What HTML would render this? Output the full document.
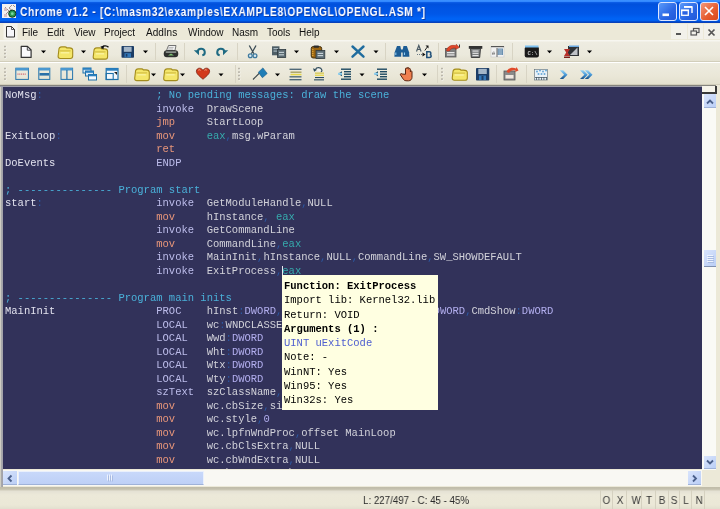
<!DOCTYPE html>
<html><head><meta charset="utf-8">
<style>
*{margin:0;padding:0;box-sizing:border-box}
html,body{width:720px;height:509px;overflow:hidden;background:#ECE9D8;font-family:"Liberation Sans",sans-serif}
.a{position:absolute}
#title{left:0;top:0;width:720px;height:24px;background:linear-gradient(#3C92FF 0,#3288FF 1.5px,#0A5CE6 2.5px,#0050DC 4px,#0054E3 8px,#0057E8 14px,#0064F6 19px,#0060F0 20.5px,#0044C4 22px,#0A40B8 22.6px,#DCDCEE 23px,#EEEDE4 24px)}
#ttext{will-change:transform;left:20px;top:5px;color:#fff;text-shadow:1px 1px 0 #0A3CA8;font-weight:bold;font-size:12px;letter-spacing:0.8px;white-space:nowrap;transform:scaleX(0.85);transform-origin:0 0}
.tbtn{position:absolute;top:2px;width:19px;height:19px;border:1px solid #DDE6FF;border-radius:3px;background:linear-gradient(135deg,#5A9AFA,#2A66E4 60%,#2058D8)}
#menu{left:0;top:23px;width:720px;height:17px;background:#ECE9D8}
.mi{position:absolute;will-change:transform;top:27px;font-size:10px;color:#111}
.tb{position:absolute;left:0;width:720px;border-bottom:1px solid #D2CEBB}
#ed{left:3px;top:87px;width:699px;height:382px;background:#32325A;overflow:hidden}
#frame{left:0;top:85px;width:718px;height:403px;background:linear-gradient(#85847E 0,#85847E 1px,#9E9EAA 1px,#9E9EAA 2px,transparent 2px),linear-gradient(90deg,#CFCDC2 0,#CFCDC2 1px,#AAAAAA 1px,#A0A0A8 3px,transparent 3px)}
#code{position:absolute;will-change:transform;left:2px;top:1.5px;font-family:"Liberation Mono",monospace;font-size:10.5px;line-height:13.5px;white-space:pre;color:#D2D2DA}
.l{color:#E2E2EE}.p{color:#2C58A2}.c{color:#4AB0D8}.d{color:#BCBCEA}.i{color:#E8967A}.r{color:#36AAAC}.t{color:#B2AEEE}
#tip{left:282px;top:275px;width:156px;height:135px;background:#FFFFE1}
#tipt{position:absolute;will-change:transform;left:2px;top:3.5px;font-family:"Liberation Mono",monospace;font-size:10.5px;line-height:14.3px;white-space:pre;color:#000}
#vs{left:702px;top:87px;width:15px;height:383px;background:#FAFAF6;border-right:1px solid #E4E2D8}
#hs{left:3px;top:470px;width:699px;height:16px;background:#F9F8F3}
#corner{left:702px;top:470px;width:15px;height:17px;background:#ECE9D8}
#rstrip{left:716px;top:85px;width:4px;height:402px;background:#ECE9D8}
.sbtn{position:absolute;background:linear-gradient(135deg,#D9E4FC,#BACEF6);border-bottom:1px solid #9FB2D8}
#status{left:0;top:487px;width:720px;height:22px;background:linear-gradient(#BFBBA8 0,#C4C0AD 2px,#CFCBB9 3px,#E4E1D4 4px,#ECE9D9 8px,#EBE8D7 18px,#E2DFCF 22px)}
#stext{will-change:transform;left:363px;top:493px;font-size:11.6px;color:#2A2A2A;white-space:nowrap;transform:scaleX(0.84);transform-origin:0 0}
.sl{will-change:transform;position:absolute;top:493px;font-size:11.6px;color:#333;transform:scaleX(0.84)}
.sd{position:absolute;top:490px;width:1px;height:19px;background:#D5D1C0}
</style></head><body>
<div id="title" class="a"></div>
<div id="ttext" class="a">Chrome v1.2 - [C:\masm32\examples\EXAMPLE8\OPENGL\OPENGL.ASM *]</div>
<div class="tbtn" style="left:658px"></div>
<div class="tbtn" style="left:679px"></div>
<div class="tbtn" style="left:700px;background:linear-gradient(135deg,#F4977A,#E55B2E 60%,#D8481C)"></div>
<div id="menu" class="a"></div>
<div class="mi" style="left:22px">File</div>
<div class="mi" style="left:47px">Edit</div>
<div class="mi" style="left:74px">View</div>
<div class="mi" style="left:104px">Project</div>
<div class="mi" style="left:146px">AddIns</div>
<div class="mi" style="left:188px">Window</div>
<div class="mi" style="left:232px">Nasm</div>
<div class="mi" style="left:267px">Tools</div>
<div class="mi" style="left:299px">Help</div>
<div class="tb" style="top:40px;height:22px;background:linear-gradient(#F7F6F0 0,#F7F6F0 1px,#EEECE1 2px,#EBE9DC 15px,#E5E2D3 21px)"></div>
<div class="a" style="left:0;top:62px;width:720px;height:1px;background:#FFFFFF"></div><div class="tb" style="top:63px;height:22px;background:linear-gradient(#EEECE0,#EAE7D8 60%,#E4E1CF)"></div>
<!--ICONS-->
<svg class="a" style="left:0;top:0" width="720" height="90" viewBox="0 0 720 90">
<!-- title icon -->
<g>
<rect x="2" y="4" width="14" height="14" fill="#F2F0F0"/>
<path d="M5 7l4 4M9 11l-4 4M12 5l-3 3M9 8l4 3M13 5l2 2" stroke="#8A7A78" stroke-width="1" opacity="0.8"/>
<rect x="4" y="8" width="3" height="3" fill="#D8C0C4"/><rect x="4" y="14" width="3" height="3" fill="#D8C0C4"/>
<circle cx="12.3" cy="13.7" r="3.6" fill="#2A9A50" stroke="#0E3A20" stroke-width="1"/>
<circle cx="12.3" cy="13.7" r="1.4" fill="#7AD8A0"/>
</g>
<!-- title buttons glyphs -->
<rect x="662.5" y="13.5" width="6.5" height="2.6" fill="#fff"/>
<path d="M684 7h8v6" fill="none" stroke="#fff" stroke-width="1.4"/><rect x="684" y="6" width="8" height="1.6" fill="#fff"/>
<rect x="681.7" y="10.3" width="6.6" height="5" fill="#2A62E2" stroke="#fff" stroke-width="1.3"/><rect x="681" y="9.6" width="8" height="1.6" fill="#fff"/>
<path d="M705 7l8 8M713 7l-8 8" stroke="#fff" stroke-width="1.6"/>
<!-- menu doc icon -->
<rect x="3.5" y="23.5" width="14" height="16" fill="#F4F3EC"/>
<path d="M6.5 26.5h5l3 3v7.5h-8z" fill="#F6F6FA" stroke="#333" stroke-width="1"/>
<path d="M11.5 26.5v3h3" fill="none" stroke="#333" stroke-width="0.8"/>
<!-- MDI buttons -->
<rect x="671" y="24" width="16" height="15" fill="#F2F1EA"/>
<rect x="688" y="24" width="15" height="15" fill="#F2F1EA"/>
<rect x="704" y="24" width="16" height="15" fill="#F2F1EA"/>
<rect x="676" y="33" width="5" height="2" fill="#555"/>
<rect x="693.5" y="28.5" width="5.5" height="4" fill="none" stroke="#555" stroke-width="1.2"/>
<rect x="691" y="31" width="5.5" height="4" fill="#F2F1EA" stroke="#555" stroke-width="1.2"/>
<path d="M708.5 29.5l6 6M714.5 29.5l-6 6" stroke="#555" stroke-width="1.7"/>
<!-- grips -->
<rect x="4.7" y="46.3" width="1.6" height="1.6" fill="#FFFFFF"/><rect x="4.2" y="45.8" width="1.6" height="1.6" fill="#ABA79A"/><rect x="4.7" y="49.8" width="1.6" height="1.6" fill="#FFFFFF"/><rect x="4.2" y="49.3" width="1.6" height="1.6" fill="#ABA79A"/><rect x="4.7" y="53.3" width="1.6" height="1.6" fill="#FFFFFF"/><rect x="4.2" y="52.8" width="1.6" height="1.6" fill="#ABA79A"/><rect x="4.7" y="56.8" width="1.6" height="1.6" fill="#FFFFFF"/><rect x="4.2" y="56.3" width="1.6" height="1.6" fill="#ABA79A"/><rect x="4.7" y="68.3" width="1.6" height="1.6" fill="#FFFFFF"/><rect x="4.2" y="67.8" width="1.6" height="1.6" fill="#ABA79A"/><rect x="4.7" y="71.8" width="1.6" height="1.6" fill="#FFFFFF"/><rect x="4.2" y="71.3" width="1.6" height="1.6" fill="#ABA79A"/><rect x="4.7" y="75.3" width="1.6" height="1.6" fill="#FFFFFF"/><rect x="4.2" y="74.8" width="1.6" height="1.6" fill="#ABA79A"/><rect x="4.7" y="78.8" width="1.6" height="1.6" fill="#FFFFFF"/><rect x="4.2" y="78.3" width="1.6" height="1.6" fill="#ABA79A"/><rect x="238.7" y="68.3" width="1.6" height="1.6" fill="#FFFFFF"/><rect x="238.2" y="67.8" width="1.6" height="1.6" fill="#ABA79A"/><rect x="238.7" y="71.8" width="1.6" height="1.6" fill="#FFFFFF"/><rect x="238.2" y="71.3" width="1.6" height="1.6" fill="#ABA79A"/><rect x="238.7" y="75.3" width="1.6" height="1.6" fill="#FFFFFF"/><rect x="238.2" y="74.8" width="1.6" height="1.6" fill="#ABA79A"/><rect x="238.7" y="78.8" width="1.6" height="1.6" fill="#FFFFFF"/><rect x="238.2" y="78.3" width="1.6" height="1.6" fill="#ABA79A"/><rect x="441.7" y="68.3" width="1.6" height="1.6" fill="#FFFFFF"/><rect x="441.2" y="67.8" width="1.6" height="1.6" fill="#ABA79A"/><rect x="441.7" y="71.8" width="1.6" height="1.6" fill="#FFFFFF"/><rect x="441.2" y="71.3" width="1.6" height="1.6" fill="#ABA79A"/><rect x="441.7" y="75.3" width="1.6" height="1.6" fill="#FFFFFF"/><rect x="441.2" y="74.8" width="1.6" height="1.6" fill="#ABA79A"/><rect x="441.7" y="78.8" width="1.6" height="1.6" fill="#FFFFFF"/><rect x="441.2" y="78.3" width="1.6" height="1.6" fill="#ABA79A"/>
<!-- separators -->
<g fill="#D8D4C4">
<rect x="155" y="43" width="1" height="17"/><rect x="184" y="43" width="1" height="17"/><rect x="237" y="43" width="1" height="17"/>
<rect x="385" y="43" width="1" height="17"/><rect x="438" y="43" width="1" height="17"/><rect x="512" y="43" width="1" height="17"/>
<rect x="126" y="65" width="1" height="18"/><rect x="235" y="65" width="1" height="18"/><rect x="437" y="65" width="1" height="18"/>
<rect x="496" y="65" width="1" height="18"/><rect x="526" y="65" width="1" height="18"/>
</g>
<!-- dropdown arrows -->
<g fill="#000">
<path d="M41 50.5h5l-2.5 2.8z"/><path d="M81 50.5h5l-2.5 2.8z"/><path d="M143 50.5h5l-2.5 2.8z"/>
<path d="M294 50.5h5l-2.5 2.8z"/><path d="M334 50.5h5l-2.5 2.8z"/><path d="M373.5 50.5h5l-2.5 2.8z"/>
<path d="M547 50.5h5l-2.5 2.8z"/><path d="M587 50.5h5l-2.5 2.8z"/>
<path d="M151 73.5h5l-2.5 2.8z"/><path d="M180 73.5h5l-2.5 2.8z"/><path d="M218.5 73.5h5l-2.5 2.8z"/>
<path d="M275 73.5h5l-2.5 2.8z"/><path d="M359.5 73.5h5l-2.5 2.8z"/><path d="M422 73.5h5l-2.5 2.8z"/>
</g>
<!-- ROW 1 -->
<!-- new doc -->
<path d="M21.2 46.4h6.3l3.6 3.6v7.4h-9.9z" fill="#FAFAFC" stroke="#333" stroke-width="1.2" stroke-linejoin="round"/>
<path d="M27.3 46.6v3.6h3.6" fill="none" stroke="#333" stroke-width="0.9"/>
<!-- open folder -->
<path d="M58.800000000000004 50.3 q0 -3.4 3 -3.4 h3 q1.5 0 2 1 h2.6 q3.3 0 3.3 2.4 v5.8 q0 2.4 -2.4 2.4 h-10.0 q-2.2 0 -2.2 -2.2 z" fill="#F4E66A" stroke="#A38C1C" stroke-width="1.1"/><path d="M59.7 50.9h10.9" stroke="#C9B23A" stroke-width="0.9"/><path d="M60.7 52.8h8.5" stroke="#FBF4A8" stroke-width="1.2"/>
<!-- folder with arrow -->
<path d="M93.89999999999999 51.3 q0 -3.4 3 -3.4 h3 q1.5 0 2 1 h2.6 q3.1 0 3.1 2.4 v5.4 q0 2.4 -2.4 2.4 h-9.8 q-2.2 0 -2.2 -2.2 z" fill="#F4E66A" stroke="#A38C1C" stroke-width="1.1"/><path d="M94.8 51.9h10.7" stroke="#C9B23A" stroke-width="0.9"/><path d="M95.8 53.8h8.3" stroke="#FBF4A8" stroke-width="1.2"/>
<path d="M102 48.5c0.2-3 4.5-3.5 6.5-1.2" fill="none" stroke="#111" stroke-width="1.3"/>
<path d="M100.4 46.6l3 2.8 0.6-3.6z" fill="#111"/>
<!-- save -->
<rect x="121.5" y="46" width="12.5" height="11.8" rx="0.8" fill="#1C3D66"/>
<rect x="123.8" y="46.8" width="7.8" height="5" fill="#A4B6C8"/>
<rect x="124.5" y="53.2" width="6.5" height="4.2" fill="#3478B8"/>
<rect x="125.8" y="54" width="1.6" height="2.6" fill="#1C3D66"/>
<!-- printer -->
<path d="M166.5 50.5l2-5h7.5l-1 5z" fill="#F0F0F0" stroke="#555" stroke-width="0.8"/>
<path d="M168.5 47.5h5M168 49h5" stroke="#999" stroke-width="0.6"/>
<rect x="163.8" y="50.3" width="14.4" height="7" rx="3" fill="#2E302E"/>
<rect x="165.5" y="51.3" width="11" height="1.6" rx="0.8" fill="#8A908A"/>
<path d="M168 55.5h6l-3-2z" fill="#7CC070"/>
<!-- undo / redo -->
<path d="M197.6 51.8A3.6 3.4 0 1 1 202.3 55.4" fill="none" stroke="#1E6A82" stroke-width="2"/>
<path d="M193.8 50.2h5.2v5z" fill="#1E6A82"/>
<path d="M224.4 51.8A3.6 3.4 0 1 0 219.7 55.4" fill="none" stroke="#1E6A82" stroke-width="2"/>
<path d="M228.2 50.2h-5.2v5z" fill="#1E6A82"/>
<!-- scissors -->
<path d="M249.3 45.5l4.6 8.3M256 45.5l-4.6 8.3" stroke="#3A4A54" stroke-width="1.3"/>
<circle cx="250.3" cy="55.8" r="1.9" fill="#D8E8F0" stroke="#3F7A9E" stroke-width="1.3"/>
<circle cx="255" cy="55.8" r="1.9" fill="#D8E8F0" stroke="#3F7A9E" stroke-width="1.3"/>
<!-- copy -->
<rect x="272" y="46.3" width="7.5" height="9" fill="#4E5E66"/>
<rect x="273.5" y="48" width="4.5" height="1.2" fill="#A8B8C0"/><rect x="273.5" y="50.5" width="4.5" height="1.2" fill="#A8B8C0"/>
<rect x="277.5" y="49.5" width="8.2" height="8" fill="#5A6A72" stroke="#2E3A40" stroke-width="0.8"/>
<rect x="279" y="51.8" width="5" height="1.2" fill="#C0CCD2"/><rect x="279" y="54.2" width="5" height="1.2" fill="#C0CCD2"/>
<!-- paste -->
<rect x="311.2" y="46.5" width="10.5" height="11.5" rx="2" fill="#9A6410" stroke="#3A2808" stroke-width="0.9"/>
<path d="M312.8 49v7" stroke="#E8B040" stroke-width="1.2" stroke-dasharray="1.2 0.8"/>
<rect x="313.5" y="45.4" width="5.5" height="2.4" rx="0.8" fill="#2A2A2A"/>
<rect x="316" y="50.5" width="8.8" height="8" fill="#5E6E76" stroke="#2E3A40" stroke-width="0.8"/>
<rect x="317.6" y="52.8" width="5.5" height="1.2" fill="#C8D2D8"/><rect x="317.6" y="55" width="5.5" height="1.2" fill="#C8D2D8"/>
<!-- delete X -->
<path d="M352.5 46.5l11 10.2M363.5 46.5l-11 10.2" stroke="#1F6C9E" stroke-width="2.4" stroke-linecap="round"/>
<!-- binoculars -->
<path d="M397 46h3.3l0.9 4v6.8h-6.8l0.3-4.5z" fill="#1C5C94"/><path d="M406.8 46h-3.3l-0.9 4v6.8h6.8l-0.3-4.5z" fill="#1C5C94"/><rect x="400.5" y="49.5" width="3" height="3" fill="#1C5C94"/>
<path d="M395.8 52.5v2.5M404.5 52.5v2.5" stroke="#8CC8F0" stroke-width="1.1"/>
<!-- replace -->
<path d="M416.5 51.5l2.3-6 2.3 6M417.4 49.5h2.8" fill="none" stroke="#4A5A64" stroke-width="1.2"/>
<path d="M424.8 50.5l2.5-3.5" stroke="#222" stroke-width="1"/><path d="M425.5 45.5h3v3z" fill="#111"/>
<path d="M417 54.5h1M419 54.5h1M421 54.5h1" stroke="#6A7A84" stroke-width="1"/>
<path d="M422.5 52.5l3 2-3 2z" fill="#111"/>
<path d="M426.8 51.8h2.6c1.8 0 2 2.6 0.4 2.8c2 0.2 1.9 2.8-0.4 2.8h-2.6z" fill="none" stroke="#1E4E78" stroke-width="1.5"/>
<!-- icon window w/ red arrow -->
<rect x="445.5" y="48.5" width="10.5" height="8.5" fill="#7C7C7C" stroke="#555" stroke-width="0.8"/>
<rect x="447" y="52" width="7.5" height="1.3" fill="#E8E8E8"/><rect x="447" y="54.3" width="7.5" height="1.3" fill="#E8E8E8"/>
<path d="M446.5 51c0.5-4.5 5-6.5 9.5-5.3l0.3-1.5 3 3.3-3.8 2 0.3-1.5c-3-0.5-5.5 0.8-6.3 3z" fill="#E0482A" stroke="#A02A18" stroke-width="0.5"/><rect x="459" y="44.5" width="1" height="3" fill="#333"/>
<!-- icon 2 -->
<rect x="468.8" y="46" width="13.5" height="2.8" fill="#333"/>
<path d="M470.5 48.5h10l-0.8 9h-8.4z" fill="#7A7D7E" stroke="#333" stroke-width="0.9"/>
<rect x="472.5" y="50.5" width="6" height="1.1" fill="#E4E4E4"/><rect x="472.5" y="52.8" width="6" height="1.1" fill="#E4E4E4"/><rect x="472.5" y="55" width="6" height="1.1" fill="#E4E4E4"/>
<!-- icon 3 -->
<rect x="491" y="46.5" width="13" height="10.5" fill="#F2F2F2" stroke="#C8C8C8" stroke-width="0.6"/>
<rect x="491" y="46" width="13" height="1.2" fill="#555"/>
<text x="492" y="54.5" font-size="6" font-family="Liberation Sans" fill="#555">&#233;</text>
<rect x="497.5" y="48.5" width="5.5" height="6.5" fill="#6A90B0"/><path d="M498.5 50h3.5M498.5 52h3.5M498.5 54h3.5" stroke="#C8D8E4" stroke-width="0.7"/>
<rect x="496.5" y="48" width="1" height="9" fill="#666"/>
<!-- cmd -->
<rect x="524.7" y="46.5" width="14.2" height="11" rx="2" fill="#1A1A1A"/>
<rect x="525" y="45.5" width="13.5" height="2" fill="#7CC0F0"/>
<text x="527.5" y="54.8" font-size="5.6" font-weight="bold" font-family="Liberation Mono" fill="#C8C8C8">C:\</text>
<!-- icon red/monitor -->
<rect x="568" y="46" width="11" height="10" fill="#2E3236"/>
<path d="M570 55l7.5-7.5v7.5z" fill="#D8DCE0" opacity="0.85"/>
<rect x="569" y="45.5" width="10" height="1.5" fill="#6AA8E0"/>
<path d="M564 49h6l-2.2 3.5 2.2 3.5h-6l2.2-3.5z" fill="#B8302A"/>
<rect x="564" y="56.5" width="6" height="1.5" fill="#7A1E18"/>
<!-- ROW 2 -->
<!-- window icons -->
<g fill="none" stroke="#2474AC" stroke-width="1">
<rect x="15.8" y="68.2" width="12.6" height="11.2"/>
<rect x="38.8" y="68.2" width="11" height="11.2"/>
<rect x="61" y="68.2" width="11.6" height="11.2"/>
</g>
<rect x="15.8" y="68" width="12.6" height="2.5" fill="#4A98D0"/>
<path d="M17.5 74.2h9" stroke="#D06070" stroke-width="1.2" stroke-dasharray="1 0.8"/>
<rect x="38.8" y="68" width="11" height="2.5" fill="#4A98D0"/>
<rect x="39.5" y="73" width="9.6" height="2.6" fill="#2A70A8"/>
<rect x="61" y="68" width="11.6" height="2.5" fill="#4A98D0"/>
<rect x="66.3" y="70" width="1.2" height="9.4" fill="#1E70A8"/>
<!-- cascade -->
<rect x="83" y="68" width="8" height="5" fill="#DCEAF6" stroke="#1E70A8" stroke-width="1"/>
<rect x="83" y="68" width="8" height="1.8" fill="#2A80C0"/>
<rect x="85.5" y="71" width="8" height="5" fill="#DCEAF6" stroke="#1E70A8" stroke-width="1"/>
<rect x="85.5" y="71" width="8" height="1.8" fill="#2A80C0"/>
<rect x="88.5" y="74.5" width="8" height="5.5" fill="#F4F8FC" stroke="#1E70A8" stroke-width="1"/>
<rect x="88.5" y="74.5" width="8" height="1.8" fill="#2A80C0"/>
<!-- window w/ arrow -->
<rect x="106.2" y="68.5" width="11.8" height="11" fill="#F4F8FC" stroke="#1E70A8" stroke-width="1.2"/>
<rect x="106.2" y="68.3" width="11.8" height="2.4" fill="#2A80C0"/>
<rect x="106.2" y="73.5" width="7" height="6" fill="none" stroke="#1E70A8" stroke-width="1.1"/>
<path d="M114 72h3v3z" fill="#222"/>
<!-- folders row2 -->
<path d="M135.4 72.3 q0 -3.4 3 -3.4 h3 q1.5 0 2 1 h2.6 q3.3 0 3.3 2.4 v5.9 q0 2.4 -2.4 2.4 h-10.0 q-2.2 0 -2.2 -2.2 z" fill="#F4E66A" stroke="#A38C1C" stroke-width="1.1"/><path d="M136.3 72.89999999999999h10.9" stroke="#C9B23A" stroke-width="0.9"/><path d="M137.3 74.8h8.5" stroke="#FBF4A8" stroke-width="1.2"/>
<path d="M164.4 72.3 q0 -3.4 3 -3.4 h3 q1.5 0 2 1 h2.6 q3.1 0 3.1 2.4 v5.9 q0 2.4 -2.4 2.4 h-9.8 q-2.2 0 -2.2 -2.2 z" fill="#F4E66A" stroke="#A38C1C" stroke-width="1.1"/><path d="M165.3 72.89999999999999h10.7" stroke="#C9B23A" stroke-width="0.9"/><path d="M166.3 74.8h8.3" stroke="#FBF4A8" stroke-width="1.2"/>
<!-- heart -->
<path d="M203 79.3c-2.3-2.3-6.6-5-6.6-8c0-1.9 1.4-3.1 3.1-3.1c1.6 0 2.8 1 3.5 2.1c0.7-1.1 1.9-2.1 3.5-2.1c1.7 0 3.1 1.2 3.1 3.1c0 3-4.3 5.7-6.6 8z" fill="#D23A1C" stroke="#7A1C0C" stroke-width="0.8"/>
<path d="M198.3 70.3c0.6-0.7 1.6-0.7 2.2 0M204.6 70.3c0.6-0.7 1.6-0.7 2.2 0" stroke="#F8B090" stroke-width="1" fill="none"/>
<!-- flag pen -->
<path d="M253 79.5l9.5-9.5" stroke="#3A4448" stroke-width="1.1"/>
<path d="M258.3 72.3l4.6-4.4 4.3 5.6-4.8 4.2z" fill="#1F7DB6" stroke="#165A88" stroke-width="0.6"/>
<!-- lines -->
<rect x="289.5" y="68.7" width="12" height="1.1" fill="#2A4A60"/>
<rect x="290.5" y="71.5" width="11" height="1.4" fill="#A8A060"/>
<rect x="290.5" y="73.8" width="11" height="1.5" fill="#E6D84A"/>
<rect x="289.5" y="76.3" width="12" height="1.1" fill="#2A4A60"/>
<rect x="289.5" y="79.2" width="12" height="1.1" fill="#2A4A60"/>
<!-- bookmark -->
<path d="M315.5 69.5c1-2.5 5.5-2.5 6.3 0.3c0.4 1.3-0.3 2-1 2.2" fill="#F4F4F0" stroke="#2E4A5A" stroke-width="1.2"/>
<path d="M313 68.3l1.2 3.4 2.8-2z" fill="#2E4A5A"/>
<rect x="315" y="72.5" width="9" height="1.3" fill="#D8C850"/>
<rect x="315" y="74.6" width="9" height="1.3" fill="#E6D84A"/>
<rect x="315" y="77" width="9" height="1.1" fill="#2A4A60"/>
<rect x="314" y="79.3" width="10" height="1.1" fill="#2A4A60"/>
<!-- indent/outdent -->
<g fill="#1E4A62">
<rect x="341" y="68.5" width="10" height="1.4"/><rect x="344" y="71" width="7" height="1.4"/><rect x="344" y="73.5" width="7" height="1.4"/><rect x="344" y="76" width="7" height="1.4"/><rect x="341" y="78.5" width="10" height="1.4"/>
<path d="M338 73.8l4 -2.5v5z"/>
<rect x="377" y="68.5" width="10" height="1.4"/><rect x="380" y="71" width="7" height="1.4"/><rect x="380" y="73.5" width="7" height="1.4"/><rect x="380" y="76" width="7" height="1.4"/><rect x="377" y="78.5" width="10" height="1.4"/>
<path d="M374 73.8l4 -2.5v5z"/>
</g>
<rect x="338" y="72.8" width="4" height="2" fill="#8ED0F0"/><rect x="374" y="72.8" width="4" height="2" fill="#8ED0F0"/>
<!-- hand -->
<path d="M402 74c-1-1-2 0-1.5 1l3 4.5c0.8 1 2 1.3 3.5 1.3h1.5c2 0 3.5-1.5 3.5-3.5v-5.5c0-1.2-1.6-1.2-1.6 0v-2.5c0-1.2-1.6-1.2-1.6 0v-1c0-1.2-1.7-1.2-1.7 0v0.5c0-1.2-1.6-1.2-1.6 0v5.5z" fill="#F08050" stroke="#5A2410" stroke-width="1"/>
<!-- open folder row2 -->
<path d="M452.90000000000003 72.5 q0 -3.4 3 -3.4 h3 q1.5 0 2 1 h2.6 q3.8 0 3.8 2.4 v5.4 q0 2.4 -2.4 2.4 h-10.5 q-2.2 0 -2.2 -2.2 z" fill="#F4E66A" stroke="#A38C1C" stroke-width="1.1"/><path d="M453.8 73.1h11.4" stroke="#C9B23A" stroke-width="0.9"/><path d="M454.8 75.0h9.0" stroke="#FBF4A8" stroke-width="1.2"/>
<!-- save row2 -->
<rect x="476" y="68" width="13.3" height="12.5" rx="0.8" fill="#1C3D66"/>
<rect x="478.3" y="68.8" width="8.5" height="5.2" fill="#A4B6C8"/>
<rect x="479" y="75.5" width="7" height="4.5" fill="#3478B8"/><rect x="481.5" y="76" width="2" height="4" fill="#1C3D66"/>
<!-- doc w red arrow row2 -->
<rect x="504" y="71" width="11" height="9" fill="#8A8A8A" stroke="#555" stroke-width="0.8"/>
<rect x="505.5" y="75" width="8" height="3.5" fill="#F0E8E0"/>
<path d="M506.5 72c1-4 6-5 9.5-3.5l0.5-1.5 2 3.5-3.5 1.5 0.6-1.4c-2.5-1-5.5 0-6.5 2.5z" fill="#E04A2A"/>
<!-- grid -->
<rect x="534.5" y="69.5" width="13" height="10.5" fill="#EAF2F8" stroke="#5A6A74" stroke-width="0.6"/>
<g fill="#6AAAD8"><circle cx="537" cy="71.5" r="1"/><circle cx="540" cy="70.5" r="1"/><circle cx="543" cy="71.5" r="1"/><circle cx="546" cy="70.5" r="1"/><circle cx="538.5" cy="74" r="1"/><circle cx="541.5" cy="74" r="1"/><circle cx="544.5" cy="74" r="1"/></g>
<g fill="#4A5A64"><rect x="535" y="77" width="12" height="0.8"/><rect x="536" y="77" width="0.8" height="3"/><rect x="538.5" y="77" width="0.8" height="3"/><rect x="541" y="77" width="0.8" height="3"/><rect x="543.5" y="77" width="0.8" height="3"/><rect x="546" y="77" width="0.8" height="3"/></g>
<!-- chevrons -->
<defs><linearGradient id="chv" x1="0" y1="0" x2="0" y2="1"><stop offset="0" stop-color="#9AD4F4"/><stop offset="0.5" stop-color="#4A9AD8"/><stop offset="1" stop-color="#164E86"/></linearGradient></defs>
<path d="M559.8 70.3h3.4l4.3 4.4-4.3 4.4h-3.4l4.3-4.4z" fill="url(#chv)"/>
<path d="M580 70.3h3.4l4.3 4.4-4.3 4.4h-3.4l4.3-4.4z" fill="url(#chv)"/>
<path d="M584.8 70.3h3.4l4.3 4.4-4.3 4.4h-3.4l4.3-4.4z" fill="url(#chv)"/>
</svg>
<!--/ICONS-->
<div id="frame" class="a"></div>
<div id="ed" class="a">
<div id="code"><span class="l">NoMsg</span><span class="p">:</span>                  <span class="c">; No pending messages: draw the scene</span>
                        <span class="d">invoke</span>  DrawScene
                        <span class="i">jmp</span>     StartLoop
<span class="l">ExitLoop</span><span class="p">:</span>               <span class="i">mov</span>     <span class="r">eax</span><span class="p">,</span>msg.wParam
                        <span class="i">ret</span>
<span class="l">DoEvents</span>                <span class="d">ENDP</span>

<span class="c">; --------------- Program start</span>
<span class="l">start</span><span class="p">:</span>                  <span class="d">invoke</span>  GetModuleHandle<span class="p">,</span>NULL
                        <span class="i">mov</span>     hInstance<span class="p">,</span> <span class="r">eax</span>
                        <span class="d">invoke</span>  GetCommandLine
                        <span class="i">mov</span>     CommandLine<span class="p">,</span><span class="r">eax</span>
                        <span class="d">invoke</span>  MainInit<span class="p">,</span>hInstance<span class="p">,</span>NULL<span class="p">,</span>CommandLine<span class="p">,</span>SW_SHOWDEFAULT
                        <span class="d">invoke</span>  ExitProcess<span class="p">,</span><span class="r">eax</span>

<span class="c">; --------------- Program main inits</span>
<span class="l">MainInit</span>                <span class="d">PROC</span>    hInst<span class="p">:</span><span class="t">DWORD</span><span class="p">,</span>hPrevInst<span class="p">:</span><span class="t">DWORD</span><span class="p">,</span>CmdLine<span class="p">:</span><span class="t">DWORD</span><span class="p">,</span>CmdShow<span class="p">:</span><span class="t">DWORD</span>
                        <span class="d">LOCAL</span>   wc<span class="p">:</span>WNDCLASSEX
                        <span class="d">LOCAL</span>   Wwd<span class="p">:</span><span class="t">DWORD</span>
                        <span class="d">LOCAL</span>   Wht<span class="p">:</span><span class="t">DWORD</span>
                        <span class="d">LOCAL</span>   Wtx<span class="p">:</span><span class="t">DWORD</span>
                        <span class="d">LOCAL</span>   Wty<span class="p">:</span><span class="t">DWORD</span>
                        <span class="d">szText</span>  szClassName<span class="p">,</span>"OPENGL_CLASS"
                        <span class="i">mov</span>     wc.cbSize<span class="p">,</span>sizeof WNDCLASSEX
                        <span class="i">mov</span>     wc.style<span class="p">,</span><span class="t">0</span>
                        <span class="i">mov</span>     wc.lpfnWndProc<span class="p">,</span>offset MainLoop
                        <span class="i">mov</span>     wc.cbClsExtra<span class="p">,</span>NULL
                        <span class="i">mov</span>     wc.cbWndExtra<span class="p">,</span>NULL
                        <span class="i">m2m</span>     wc.hInstance<span class="p">,</span>hInst</div>
</div>
<div class="a" style="left:282px;top:266px;width:1px;height:12px;background:#E8E8F0"></div>
<div id="tip" class="a"><div id="tipt"><b>Function: ExitProcess</b>
Import lib: Kernel32.lib
Return: VOID
<b>Arguments (1) :</b>
<span style="color:#5060D0">UINT uExitCode</span>
Note: -
WinNT: Yes
Win95: Yes
Win32s: Yes</div></div>
<div id="vs" class="a"></div>
<div id="hs" class="a"></div>
<div id="corner" class="a"></div>
<div id="rstrip" class="a"></div>
<!-- vscroll parts -->
<div class="a" style="left:702px;top:86px;width:15px;height:8px;background:#F6F4EA;border-bottom:2px solid #3A3A3A;border-right:2px solid #3A3A3A"></div>
<div class="sbtn" style="left:704px;top:94px;width:12px;height:14px"></div>
<div class="sbtn" style="left:704px;top:250px;width:12px;height:17px;border-bottom:1px solid #8090B0"></div>
<div class="sbtn" style="left:704px;top:456px;width:12px;height:13px"></div>
<div class="sbtn" style="left:3px;top:471px;width:14px;height:14px"></div>
<div class="sbtn" style="left:18px;top:471px;width:186px;height:14px;border:1px solid #EAF0FC;border-bottom:1px solid #9FB2D8;background:linear-gradient(#C8D8FA,#BED0F6)"></div>
<div class="sbtn" style="left:688px;top:471px;width:13px;height:14px"></div>
<svg class="a" style="left:0;top:85px" width="720" height="402" viewBox="0 85 720 402">
<path d="M707 103.5l3-3 3 3" fill="none" stroke="#4A5F8A" stroke-width="1.8"/>
<path d="M707 460.5l3 3 3-3" fill="none" stroke="#4A5F8A" stroke-width="1.8"/>
<path d="M11.5 475.5l-3 3 3 3" fill="none" stroke="#4A5F8A" stroke-width="1.8"/>
<path d="M693 475.5l3 3-3 3" fill="none" stroke="#4A5F8A" stroke-width="1.8"/>
<g stroke="#EEF3FE" stroke-width="1"><path d="M707 255.5h6M707 257.5h6M707 259.5h6M707 261.5h6"/><path d="M107.5 474.5v6M109.5 474.5v6M111.5 474.5v6"/></g>
<g stroke="#A8BBE2" stroke-width="1"><path d="M708 256.5h6M708 258.5h6M708 260.5h6M708 262.5h6"/><path d="M108.5 475.5v6M110.5 475.5v6M112.5 475.5v6"/></g>
</svg>
<div id="status" class="a"></div>
<div id="stext" class="a">L: 227/497 - C: 45 - 45%</div>
<div class="sd" style="left:600px"></div><div class="sd" style="left:612px"></div><div class="sd" style="left:626px"></div><div class="sd" style="left:641px"></div><div class="sd" style="left:655px"></div><div class="sd" style="left:668px"></div><div class="sd" style="left:679px"></div><div class="sd" style="left:691px"></div><div class="sd" style="left:704px"></div><div class="sl" style="left:601.5px;width:8px;text-align:center">O</div><div class="sl" style="left:616.1px;width:8px;text-align:center">X</div><div class="sl" style="left:630.5px;width:8px;text-align:center">W</div><div class="sl" style="left:644.5px;width:8px;text-align:center">T</div><div class="sl" style="left:657.5px;width:8px;text-align:center">B</div><div class="sl" style="left:670.1px;width:8px;text-align:center">S</div><div class="sl" style="left:681.5px;width:8px;text-align:center">L</div><div class="sl" style="left:694.5px;width:8px;text-align:center">N</div>
</body></html>
